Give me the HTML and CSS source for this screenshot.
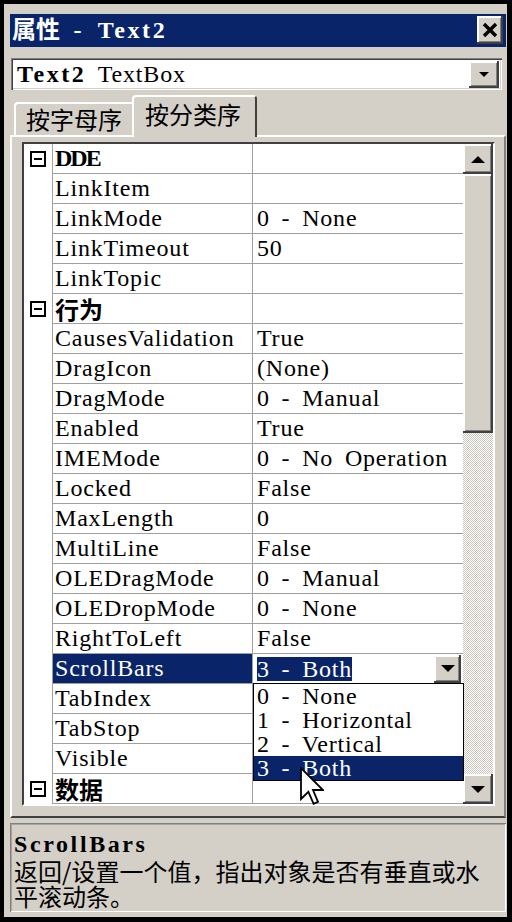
FILE: index.html
```html
<!DOCTYPE html>
<html lang="zh-CN">
  <head>
    <meta charset="UTF-8" />
    <meta name="viewport" content="width=device-width, initial-scale=1.0" />
    <title>属性 - Text2</title>
    <link rel="stylesheet" href="styles.css">
  </head>
  <body>
    <div class="window">
      <div class="titlebar">
        <span class="title">属性<span class="latin b"> - Text2</span></span>
        <span class="close raised">
          <svg width="16" height="16" viewBox="0 0 16 16">
            <path d="M2 2 L14 14 M14 2 L2 14" stroke="#000" stroke-width="3.4" />
          </svg>
        </span>
      </div>

      <div class="combo">
        <span class="latin"><span class="b">Text2</span> TextBox</span>
        <span class="drop raised combo-drop"><i class="arrow-down small"></i></span>
      </div>

      <div class="tabs">
        <div class="tab">按字母序</div>
        <div class="tab active">按分类序</div>
      </div>

      <div class="panel">
        <div class="grid">
          <div class="rows latin">
            <div class="row cat"><div class="gutter"><span class="minus"></span></div><div class="name b tight">DDE</div><div class="value"></div></div>
            <div class="row"><div class="gutter"></div><div class="name">LinkItem</div><div class="value"></div></div>
            <div class="row"><div class="gutter"></div><div class="name">LinkMode</div><div class="value">0 - None</div></div>
            <div class="row"><div class="gutter"></div><div class="name">LinkTimeout</div><div class="value">50</div></div>
            <div class="row"><div class="gutter"></div><div class="name">LinkTopic</div><div class="value"></div></div>
            <div class="row cat"><div class="gutter"><span class="minus"></span></div><div class="name cjk">行为</div><div class="value"></div></div>
            <div class="row"><div class="gutter"></div><div class="name">CausesValidation</div><div class="value">True</div></div>
            <div class="row"><div class="gutter"></div><div class="name">DragIcon</div><div class="value">(None)</div></div>
            <div class="row"><div class="gutter"></div><div class="name">DragMode</div><div class="value">0 - Manual</div></div>
            <div class="row"><div class="gutter"></div><div class="name">Enabled</div><div class="value">True</div></div>
            <div class="row"><div class="gutter"></div><div class="name">IMEMode</div><div class="value">0 - No Operation</div></div>
            <div class="row"><div class="gutter"></div><div class="name">Locked</div><div class="value">False</div></div>
            <div class="row"><div class="gutter"></div><div class="name">MaxLength</div><div class="value">0</div></div>
            <div class="row"><div class="gutter"></div><div class="name">MultiLine</div><div class="value">False</div></div>
            <div class="row"><div class="gutter"></div><div class="name">OLEDragMode</div><div class="value">0 - Manual</div></div>
            <div class="row"><div class="gutter"></div><div class="name">OLEDropMode</div><div class="value">0 - None</div></div>
            <div class="row"><div class="gutter"></div><div class="name">RightToLeft</div><div class="value">False</div></div>
            <div class="row selected"><div class="gutter"></div><div class="name">ScrollBars</div><div class="value"><span class="sel">3 - Both</span><span class="drop raised"><i class="arrow-down"></i></span></div></div>
            <div class="row"><div class="gutter"></div><div class="name">TabIndex</div><div class="value"></div></div>
            <div class="row"><div class="gutter"></div><div class="name">TabStop</div><div class="value"></div></div>
            <div class="row"><div class="gutter"></div><div class="name">Visible</div><div class="value"></div></div>
            <div class="row cat"><div class="gutter"><span class="minus"></span></div><div class="name cjk">数据</div><div class="value"></div></div>
          </div>

          <div class="vscroll">
            <div class="sbtn raised"><i class="arrow-up"></i></div>
            <div class="thumb raised"></div>
            <div class="track"></div>
            <div class="sbtn raised"><i class="arrow-down"></i></div>
          </div>

          <!-- open list of the ScrollBars property -->
          <div class="droplist latin">
            <div class="item">0 - None</div>
            <div class="item">1 - Horizontal</div>
            <div class="item">2 - Vertical</div>
            <div class="item active">3 - Both</div>
          </div>

          <svg class="cursor" width="24" height="40" viewBox="0 0 12 20">
            <path d="M0.5 0.5 L0.5 16 L4.2 12.4 L6.8 18.4 L9 17.4 L6.5 11.5 L11.5 11.5 Z" fill="#fff" stroke="#000" stroke-width="0.9" stroke-linejoin="miter" />
          </svg>
        </div>
      </div>

      <div class="desc">
        <div class="desc-title latin b">ScrollBars</div>
        <div class="desc-text">返回/设置一个值，指出对象是否有垂直或水<br>平滚动条。</div>
      </div>
    </div>
  </body>
</html>
```

FILE: styles.css
```css
body {
  margin: 0;
  background: #000;
  font-family: "Liberation Serif", "Noto Sans CJK SC", serif;
}
.window {
  position: relative;
  width: 503px;
  height: 913px;
  margin: 4px 0 0 4px;
  padding: 10px 1px 5px 6px;
  box-sizing: border-box;
  background: #d4d0c8;
  display: flex;
  flex-direction: column;
}
.latin {
  font-family: "Liberation Serif", "Noto Sans CJK SC", serif;
  font-size: 24px;
  letter-spacing: 0.8px;
  word-spacing: 5px;
}
.b {
  font-weight: bold;
  letter-spacing: 2.6px;
}
.b.tight {
  letter-spacing: -2px;
}
.raised {
  background: #d4d0c8;
  box-shadow: inset -2px -2px #404040, inset 2px 2px #fff, inset -3px -3px #808080;
}

/* title bar */
.titlebar {
  height: 33px;
  background: #0a246a;
  display: flex;
  align-items: flex-start;
  justify-content: space-between;
}
.title {
  color: #fff;
  font-family: "Noto Sans CJK SC", sans-serif;
  font-weight: bold;
  font-size: 24px;
  line-height: 26px;
  margin: 1px 0 0 2px;
}
.close {
  width: 26px;
  height: 28px;
  margin: 2px 3px 0 0;
  display: flex;
  align-items: center;
  justify-content: center;
}

/* object combo */
.combo {
  height: 32px;
  margin: 11px 0 0 1px;
  width: 491px;
  box-sizing: border-box;
  background: #fff;
  box-shadow: inset 1px 1px #808080, inset 2px 2px #404040, inset -1px -1px #fff, inset -2px -2px #d4d0c8;
  display: flex;
  align-items: center;
  padding: 0 3px 0 6px;
}
.drop {
  display: flex;
  align-items: center;
  justify-content: center;
  width: 27px;
  height: 28px;
  margin-left: auto;
}
.combo-drop {
  width: 30px;
  height: 27px;
}
.arrow-down {
  width: 0;
  height: 0;
  border-left: 7px solid transparent;
  border-right: 7px solid transparent;
  border-top: 7px solid #000;
}
.arrow-down.small {
  border-left-width: 5px;
  border-right-width: 5px;
  border-top-width: 5px;
}
.arrow-up {
  width: 0;
  height: 0;
  border-left: 7px solid transparent;
  border-right: 7px solid transparent;
  border-bottom: 7px solid #000;
}

/* tabs */
.tabs {
  height: 40px;
  margin-top: 5px;
  padding-left: 4px;
  display: flex;
  align-items: flex-end;
}
.tab {
  font-family: "Noto Sans CJK SC", sans-serif;
  font-size: 24px;
  box-sizing: border-box;
  height: 33px;
  width: 118px;
  padding: 1px 0 0 10px;
  line-height: 28px;
  border-top: 2px solid #fff;
  border-left: 2px solid #fff;
  border-radius: 4px 0 0 0;
  background: #d4d0c8;
}
.tab.active {
  position: relative;
  height: 42px;
  width: 125px;
  margin-bottom: -2px;
  padding: 2px 0 0 11px;
  line-height: 30px;
  border-right: 2px solid #404040;
  border-radius: 4px 4px 0 0;
}

/* property panel */
.panel {
  height: 683px;
  box-sizing: border-box;
  border-top: 2px solid #fff;
  border-left: 2px solid #fff;
  border-right: 2px solid #808080;
  border-bottom: 2px solid #404040;
  padding: 5px 0 0 10px;
}
.grid {
  position: relative;
  width: 473px;
  height: 664px;
  box-sizing: border-box;
  border-top: 2px solid #404040;
  border-left: 2px solid #404040;
  border-right: 2px solid #fff;
  border-bottom: 2px solid #fff;
  background: #fff;
  display: flex;
}
.rows {
  width: 439px;
}
.row {
  display: flex;
  height: 30px;
  line-height: 29px;
}
.gutter {
  width: 28px;
  display: flex;
  align-items: center;
  justify-content: center;
}
.minus {
  width: 16px;
  height: 16px;
  box-sizing: border-box;
  border: 2px solid #000;
  display: flex;
  align-items: center;
  justify-content: center;
}
.minus::after {
  content: "";
  width: 8px;
  height: 2px;
  background: #000;
}
.name,
.value {
  box-sizing: border-box;
  border-left: 1px solid #a0a0a0;
  border-bottom: 1px solid #a0a0a0;
  white-space: nowrap;
  overflow: hidden;
}
.name {
  width: 200px;
  padding-left: 2px;
}
.name.cjk {
  font-family: "Noto Sans CJK SC", sans-serif;
  font-weight: bold;
  font-size: 24px;
  letter-spacing: 0;
  overflow: visible;
}
.value {
  width: 211px;
  padding-left: 4px;
  display: flex;
  align-items: center;
}
.selected .name {
  background: #0a246a;
  color: #fff;
}
.sel {
  background: #0a246a;
  color: #fff;
  line-height: 24px;
}
.selected .drop {
  margin-right: 2px;
}

/* scrollbar */
.vscroll {
  width: 30px;
  display: flex;
  flex-direction: column;
}
.sbtn {
  height: 30px;
  display: flex;
  align-items: center;
  justify-content: center;
}
.thumb {
  height: 259px;
}
.track {
  flex: 1;
  background: repeating-conic-gradient(#fff 0 25%, #c8c4bc 0 50%) 0 0 / 2px 2px;
}

/* open dropdown over the grid */
.droplist {
  position: absolute;
  left: 229px;
  top: 539px;
  width: 211px;
  box-sizing: border-box;
  border: 1px solid #000;
  background: #fff;
}
.item {
  height: 24px;
  line-height: 24px;
  padding-left: 3px;
  white-space: nowrap;
}
.item.active {
  background: #0a246a;
  color: #fff;
}
.cursor {
  position: absolute;
  left: 276px;
  top: 623px;
}

/* description */
.desc {
  margin-top: 5px;
  height: 89px;
  box-sizing: border-box;
  box-shadow: inset 1px 1px #808080, inset -1px -1px #fff, inset 2px 2px #a8a49c;
  padding: 6px 0 0 4px;
}
.desc-title {
  line-height: 30px;
}
.desc-text {
  margin-top: -1px;
  font-family: "Noto Sans CJK SC", sans-serif;
  font-size: 24px;
  line-height: 25px;
}
```
